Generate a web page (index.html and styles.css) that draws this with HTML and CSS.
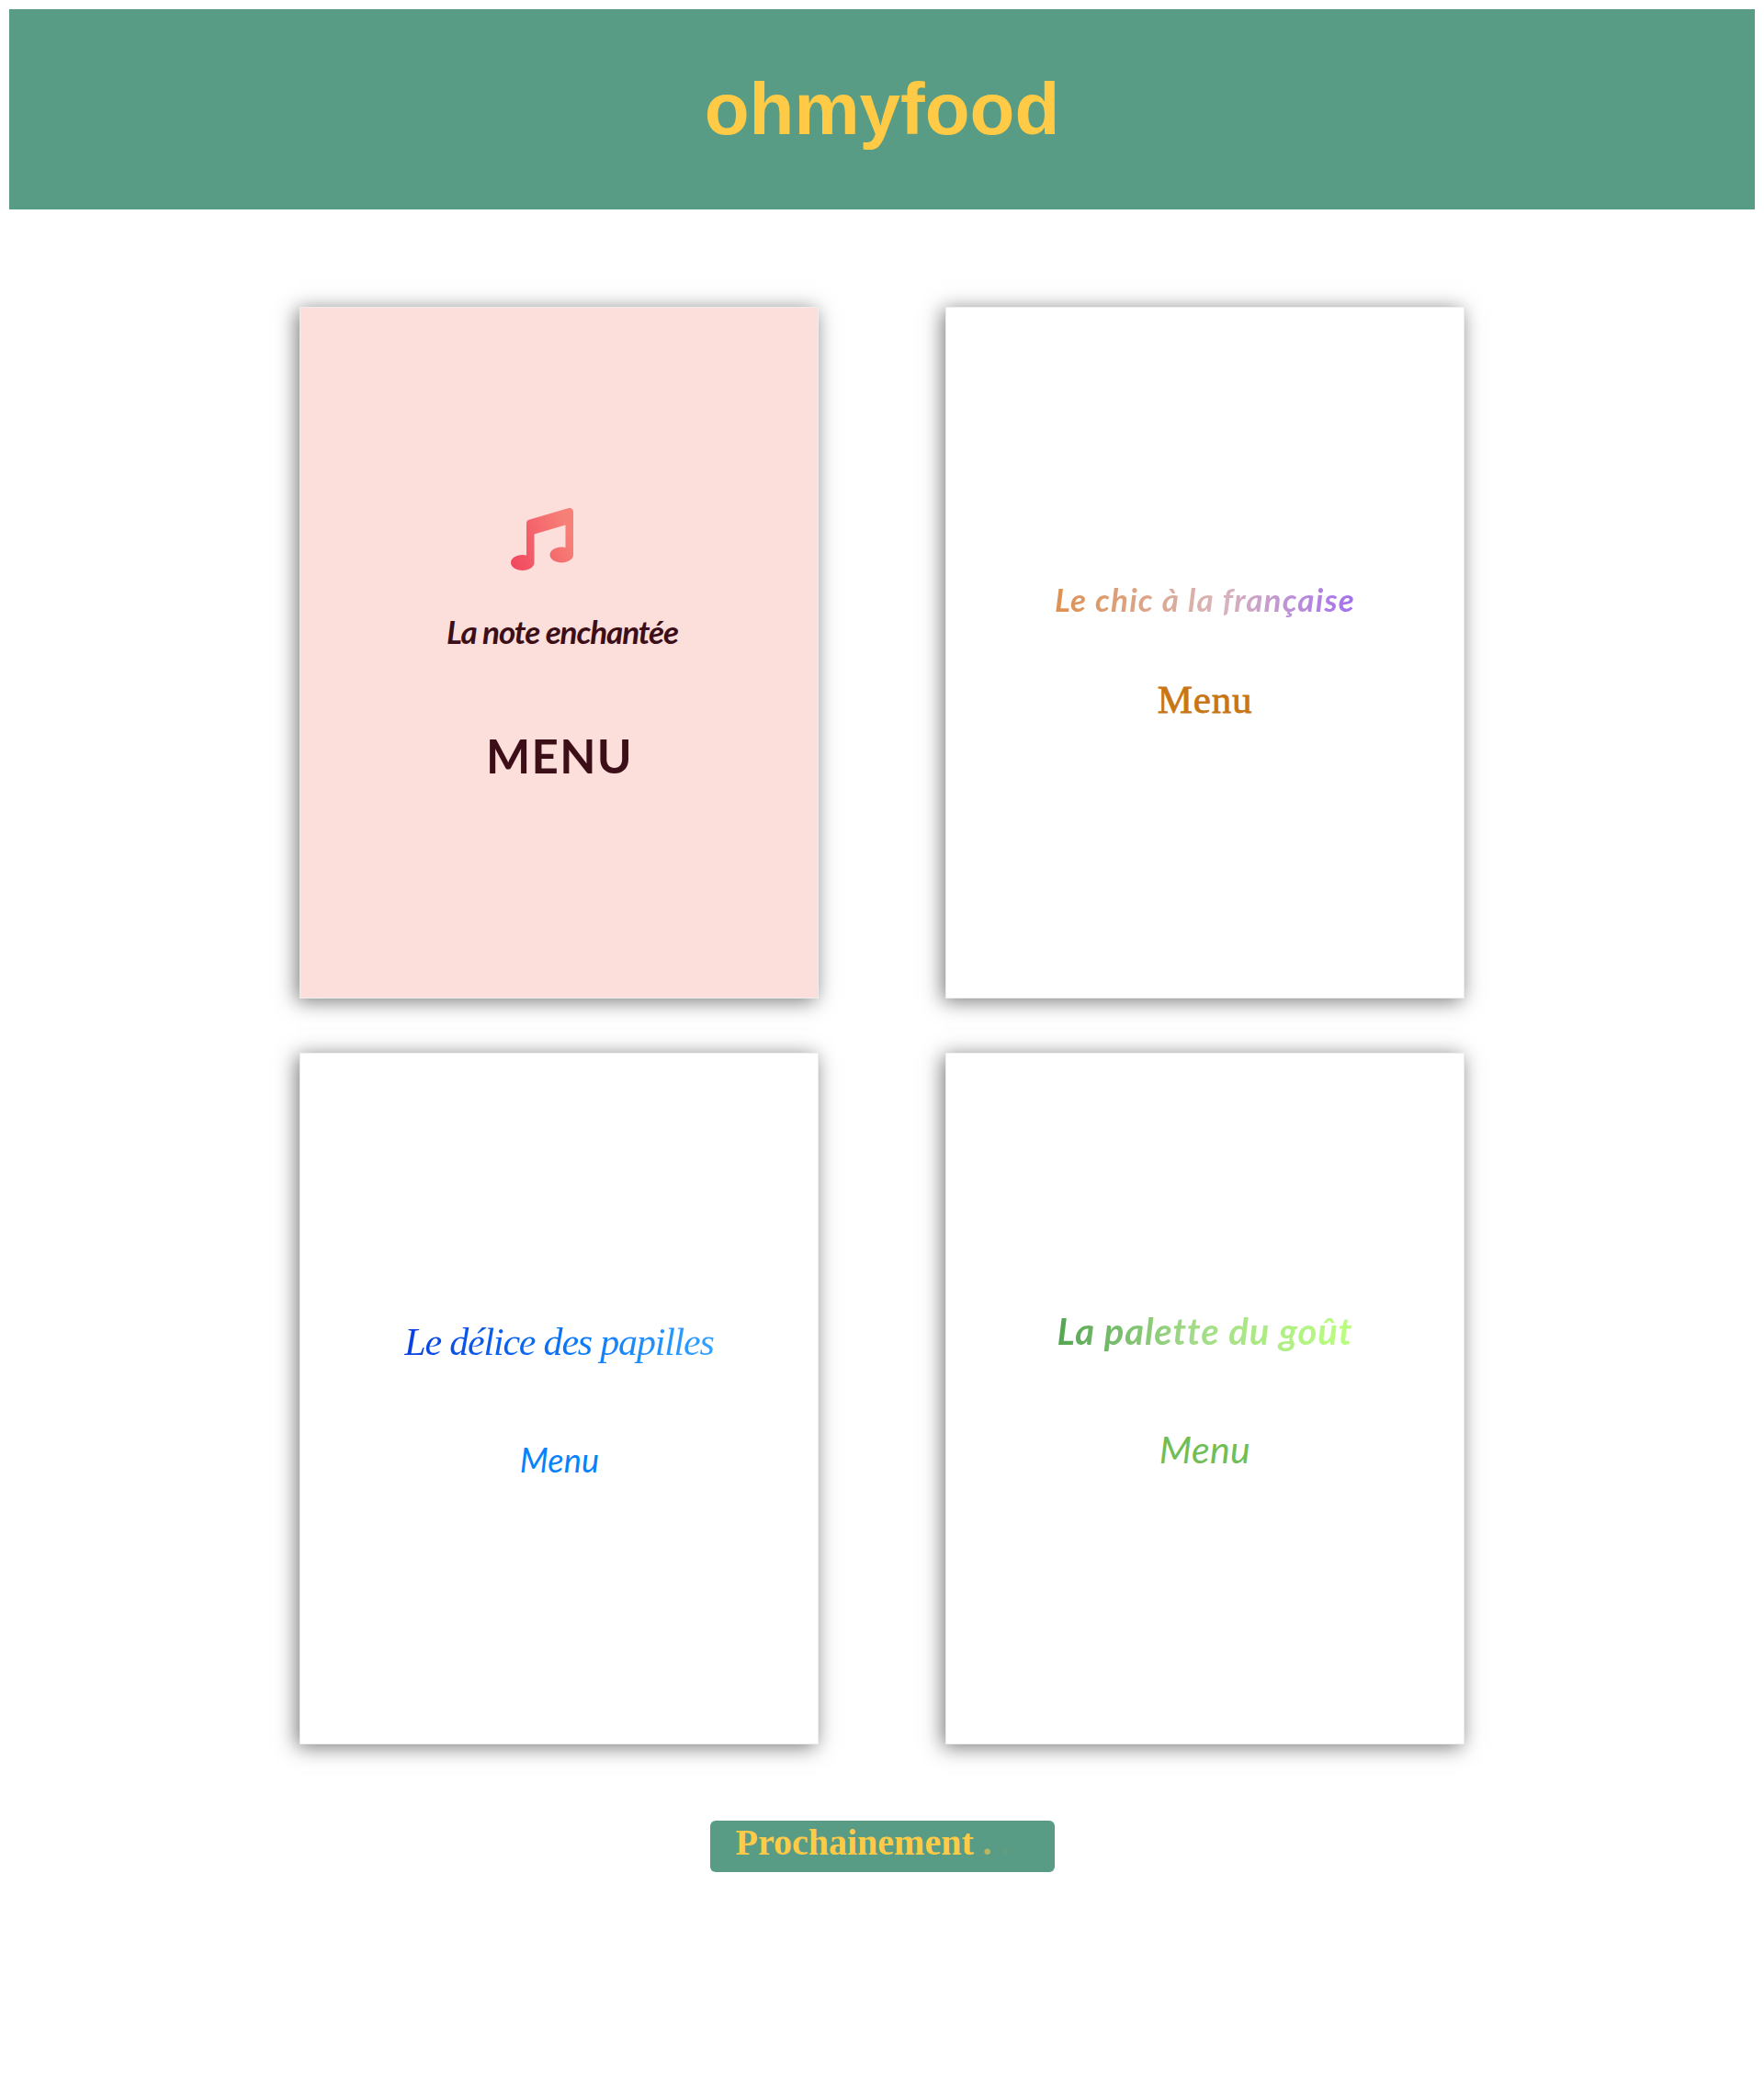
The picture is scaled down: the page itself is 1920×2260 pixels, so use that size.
FILE: index.html
```html
<!DOCTYPE html>
<html lang="fr">
<head>
<meta charset="utf-8">
<title>ohmyfood</title>
<link rel="stylesheet" href="styles.css">
</head>
<body>
<header class="header"><h1 class="logo">ohmyfood</h1></header>
<main class="menus">
  <section class="card card-note">
    <svg class="note-icon" viewBox="0 0 512 512" aria-hidden="true">
      <defs><linearGradient id="note" x1="0" y1="1" x2="1" y2=".6"><stop offset="0" stop-color="#f1465e"/><stop offset="1" stop-color="#f67f77"/></linearGradient></defs>
      <path fill="url(#note)" d="M470.38 1.51L150.41 96A32 32 0 0 0 128 126.51v261.41A139 139 0 0 0 96 384c-53 0-96 28.66-96 64s43 64 96 64 96-28.66 96-64V214.32l256-75v184.61a138.4 138.4 0 0 0-32-3.93c-53 0-96 28.66-96 64s43 64 96 64 96-28.65 96-64V32a32 32 0 0 0-41.62-30.49z"/>
    </svg>
    <h2 class="name name-note">La note enchantée</h2>
    <p class="menu menu-note">MENU</p>
  </section>
  <section class="card">
    <h2 class="name name-chic">Le chic à la française</h2>
    <p class="menu menu-chic">Menu</p>
  </section>
  <section class="card">
    <h2 class="name name-delice">Le délice des papilles</h2>
    <p class="menu menu-delice">Menu</p>
  </section>
  <section class="card">
    <h2 class="name name-palette">La palette du goût</h2>
    <p class="menu menu-palette">Menu</p>
  </section>
</main>
<footer class="footer">
  <div class="soon">Prochainement<span class="dot dot-one">.</span><span class="dot dot-two">.</span></div>
</footer>
</body>
</html>
```
FILE: styles.css
```css
* { box-sizing: border-box; }
body { margin: 10px; background: #fff; }
.header { height: 218px; background: #589c85; padding-top: 63px; }
.logo { margin: 0; font: bold 80px/92px "Liberation Sans", sans-serif; color: #ffca45; text-align: center; }
.menus {
  display: grid;
  grid-template-columns: 565px 565px;
  grid-auto-rows: 753px;
  justify-content: center;
  gap: 59px 138px;
  padding-top: 106px;
}
.card {
  display: flex;
  flex-direction: column;
  align-items: center;
  border: 1px solid #eee;
  background: #fff;
  box-shadow: -3px 3px 21px rgba(0, 0, 0, .53);
}
.card-note { background: #fcdeda; }
.note-icon { width: 68px; height: 68px; margin: 217.5px 37px 0 0; }
.name, .menu { margin: 0; line-height: 50px; white-space: nowrap; }
.name-note { margin: 41.5px 0 0 7px; font: italic bold 35px/50px Lato, sans-serif; letter-spacing: -1.1px; color: #3c0f18; }
.menu-note { margin: 81px 0 0 1px; font: bold 51px/60px Lato, sans-serif; letter-spacing: 1.3px; color: #3c0f18; }
.name-chic, .name-delice, .name-palette { color: transparent; background-clip: text; -webkit-background-clip: text; }
.name-chic { margin-top: 292px; font: italic bold 35px/50px Lato, sans-serif; letter-spacing: 1.15px; background-image: linear-gradient(to right, #de9150, #d9b6b9 55%, #a36ff0); }
.menu-chic { margin-top: 60px; font: 43px/50px "Liberation Serif", serif; letter-spacing: .8px; -webkit-text-stroke: .8px #c87614; color: #c87614; }
.name-delice { margin-top: 284px; font: italic 42px/60px "Liberation Serif", serif; letter-spacing: -1.2px; background-image: linear-gradient(to right, #0a3fe0, #0a78f8 55%, #35a2ff); }
.menu-delice { margin: 73px 0 0 1px; font: italic 36px/50px Lato, sans-serif; letter-spacing: .2px; color: #0882fb; }
.name-palette { margin-top: 272px; font: italic bold 40px/60px Lato, sans-serif; letter-spacing: .9px; background-image: linear-gradient(to right, #55a553, #a2da89 45%, #baff80); }
.menu-palette { margin-top: 74px; font: italic 41px/50px Lato, sans-serif; letter-spacing: .4px; color: #70be55; }
.footer { display: flex; justify-content: center; padding-top: 83px; }
.soon { width: 375px; height: 56px; padding-left: 28px; border-radius: 6px; background: #589c85; color: #ffca45; font: bold 40px/48px "Liberation Serif", serif; }
.dot { margin-left: 10px; }
.dot-one { opacity: .6; }
.dot-two { opacity: .05; }
```
